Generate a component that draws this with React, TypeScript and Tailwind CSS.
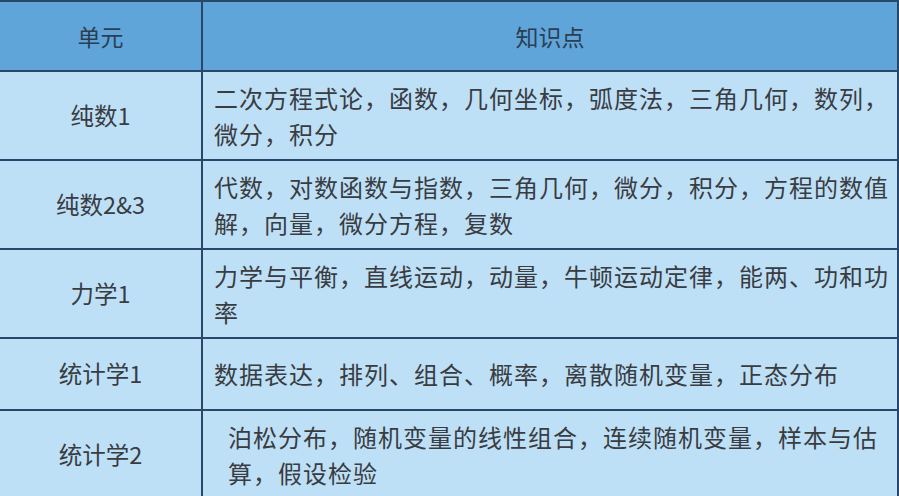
import React from "react";

const rows: { unit: string; text: string; h: string; pl: string }[] = [
  { unit: "纯数1", text: "二次方程式论，函数，几何坐标，弧度法，三角几何，数列，微分，积分", h: "h-[87px]", pl: "pl-[11px]" },
  { unit: "纯数2&3", text: "代数，对数函数与指数，三角几何，微分，积分，方程的数值解，向量，微分方程，复数", h: "h-[87px]", pl: "pl-[11px]" },
  { unit: "力学1", text: "力学与平衡，直线运动，动量，牛顿运动定律，能两、功和功率", h: "h-[87px]", pl: "pl-[11px]" },
  { unit: "统计学1", text: "数据表达，排列、组合、概率，离散随机变量，正态分布", h: "h-[70px]", pl: "pl-[11px]" },
  { unit: "统计学2", text: "泊松分布，随机变量的线性组合，连续随机变量，样本与估算，假设检验", h: "h-[87px]", pl: "pl-[25px]" },
];

export default function App() {
  return (
    <div
      className="w-[899px] h-[496px] overflow-hidden bg-[#bee0f7]"
      style={{ fontFamily: '"Noto Sans CJK SC", "Noto Sans", sans-serif' }}
    >
      <div className="w-[899px] border-t-2 border-r-2 border-[#28476a]">
        <div className="flex h-[70px] border-b-2 border-[#28476a] bg-[#5fa5da] text-[23px] text-[#2c3e52]">
          <div className="w-[203px] shrink-0 border-r-2 border-[#28476a] flex items-center justify-center">单元</div>
          <div className="flex-1 flex items-center justify-center">知识点</div>
        </div>
        {rows.map((r) => (
          <div key={r.unit} className="flex border-b-2 border-[#28476a] bg-[#bee0f7] text-[#393c41]">
            <div className={`w-[203px] ${r.h} shrink-0 border-r-2 border-[#28476a] flex items-center justify-center text-[23.5px]`}>
              {r.unit}
            </div>
            <div className={`flex-1 flex items-center ${r.pl} pr-0 text-[24px] leading-[36px] tracking-[1px]`}>
              <div>{r.text}</div>
            </div>
          </div>
        ))}
      </div>
    </div>
  );
}
